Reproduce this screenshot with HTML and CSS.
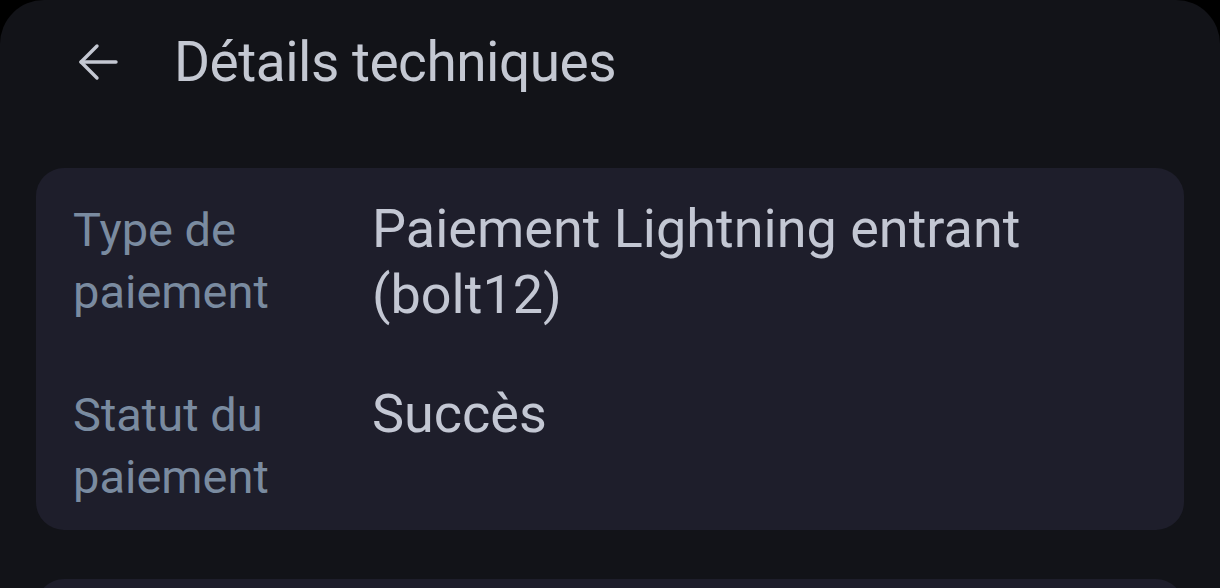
FILE: index.html
```html
<!DOCTYPE html>
<html>
<head>
  <title>Détails techniques</title>
  <meta charset="utf-8" />
  <link rel="stylesheet" href="styles.css">
</head>
<body>
  <div class="screen">
    <div class="top-bar">
      <a href="#" class="back-button">
        <svg width="44" height="44" viewBox="0 0 44 44" fill="none" stroke="currentColor" stroke-width="3.4" stroke-linecap="round" stroke-linejoin="round">
          <path d="M40 22H5" />
          <path d="M21 6L5 22L21 38" />
        </svg>
      </a>
      <h1>Détails techniques</h1>
    </div>

    <div class="card">
      <div class="row">
        <div class="label">Type de paiement</div>
        <div class="value">Paiement Lightning entrant (bolt12)</div>
      </div>
      <div class="row">
        <div class="label">Statut du paiement</div>
        <div class="value">Succès</div>
      </div>
    </div>

    <div class="card next-card"></div>
  </div>
</body>
</html>
```

FILE: styles.css
```css
body {
  margin: 0;
  padding: 0;
  background: #000;
  font-family: Roboto, "Noto Sans", sans-serif;
  overflow: hidden;
  height: 588px;
}

.screen {
  background: #121318;
  border-radius: 44px 44px 0 0;
  height: 588px;
  padding: 0 36px;
  overflow: hidden;
}

.top-bar {
  display: flex;
  align-items: center;
  height: 124px;
  gap: 54px;
  padding-left: 40px;
}

.back-button {
  color: #c4c8d2;
  display: flex;
}

h1 {
  margin: 0;
  font-size: 55px;
  font-weight: 400;
  color: #c4c8d2;
  letter-spacing: -0.5px;
}

.card {
  background: #1e1e2b;
  border-radius: 28px;
  padding: 31px 37px 22px;
  display: flex;
  flex-direction: column;
  gap: 56px;
  margin-top: 44px;
}

.row {
  display: flex;
}

.label {
  width: 299px;
  flex-shrink: 0;
  font-size: 47px;
  line-height: 62px;
  color: #7a8ba0;
}

.value {
  font-size: 54px;
  line-height: 66px;
  color: #c3c7d3;
  margin-top: -3px;
  max-width: 700px;
}

.next-card {
  margin-top: 49px;
  height: 60px;
}
```
